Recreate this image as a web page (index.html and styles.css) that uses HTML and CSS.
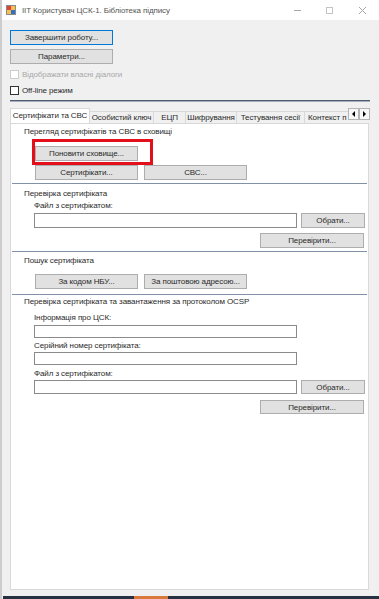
FILE: index.html
```html
<!DOCTYPE html>
<html lang="uk">
<head>
  <meta charset="UTF-8">
  <meta name="viewport" content="width=device-width, initial-scale=1.0">
  <title>IIT Користувач ЦСК-1. Бібліотека підпису</title>
  <link rel="stylesheet" href="styles.css">
</head>
<body>
  <div class="window">
    <div class="titlebar">
      <svg class="app-icon" width="10" height="10" viewBox="0 0 10 10">
        <rect x="0.5" y="0.5" width="9" height="9" fill="#f6c34a" stroke="#8a8a8a"/>
        <rect x="1" y="1" width="4" height="4" fill="#e0413a"/>
        <rect x="5" y="5" width="4" height="4" fill="#2f6fc9"/>
      </svg>
      <span class="title">IIT Користувач ЦСК-1. Бібліотека підпису</span>
      <div class="controls">
        <svg width="32" height="20" viewBox="0 0 32 20"><path d="M11 10.5h7" stroke="#a6a6a6" fill="none"/></svg>
        <svg width="32" height="20" viewBox="0 0 32 20"><rect x="11.5" y="7.5" width="6" height="6" stroke="#c4c4c4" fill="none"/></svg>
        <svg width="32" height="20" viewBox="0 0 32 20"><path d="M12 7l7 7M19 7l-7 7" stroke="#a6a6a6" fill="none"/></svg>
      </div>
    </div>

    <div class="client">
      <button class="btn btn-wide btn-default">Завершити роботу...</button>
      <button class="btn btn-wide btn-gap">Параметри...</button>
      <div class="check check-disabled"><span class="box"></span>Відображати власні діалоги</div>
      <div class="check"><span class="box"></span>Off-line режим</div>
      <div class="group-line"></div>

      <div class="tabs">
        <div class="tab-strip">
          <div class="tab-list">
            <div class="tab tab-active t1">Сертифікати та СВС</div>
            <div class="tab t2">Особистий ключ</div>
            <div class="tab t3">ЕЦП</div>
            <div class="tab t4">Шифрування</div>
            <div class="tab t5">Тестування сесії</div>
            <div class="tab t6">Контекст п</div>
          </div>
          <div class="tab-scroll">
            <span class="arrow"><svg width="9" height="10" viewBox="0 0 9 10"><path d="M3 5l3-3v6z" fill="#000"/></svg></span>
            <span class="arrow"><svg width="9" height="10" viewBox="0 0 9 10"><path d="M6 5l-3-3v6z" fill="#000"/></svg></span>
          </div>
        </div>

        <div class="tab-page">
          <div class="label head first">Перегляд сертифікатів та СВС в сховищі</div>
          <div class="indent">
            <button class="btn btn-wide refresh">Поновити сховище...</button>
            <div class="btn-row">
              <button class="btn btn-wide">Сертифікати...</button>
              <button class="btn btn-wide">СВС...</button>
            </div>
          </div>
          <div class="sep sep-a"></div>

          <div class="label head h2">Перевірка сертифіката</div>
          <div class="label sub">Файл з сертифікатом:</div>
          <div class="file-row">
            <input class="field" type="text">
            <button class="btn btn-pick">Обрати...</button>
          </div>
          <div class="check-row">
            <button class="btn btn-check">Перевірити...</button>
          </div>
          <div class="sep sep-b"></div>

          <div class="label head h3">Пошук сертифіката</div>
          <div class="indent">
            <div class="btn-row search-row">
              <button class="btn btn-wide">За кодом НБУ...</button>
              <button class="btn btn-wide">За поштовою адресою...</button>
            </div>
          </div>
          <div class="sep sep-c"></div>

          <div class="label head h4">Перевірка сертифіката та завантаження за протоколом OCSP</div>
          <div class="label sub s-info">Інформація про ЦСК:</div>
          <div class="file-row r-info"><input class="field small" type="text"></div>
          <div class="label sub s-serial">Серійний номер сертифіката:</div>
          <div class="file-row"><input class="field small" type="text"></div>
          <div class="label sub s-file">Файл з сертифікатом:</div>
          <div class="file-row">
            <input class="field mid" type="text">
            <button class="btn btn-pick mid">Обрати...</button>
          </div>
          <div class="check-row last">
            <button class="btn btn-check mid">Перевірити...</button>
          </div>

          <div class="mark"></div>
        </div>
      </div>

      <div class="taskbar"><span class="task-item"></span></div>
    </div>
  </div>
</body>
</html>
```

FILE: styles.css
```css
body {
  margin: 0;
  padding: 0;
  background: #f0f0f0;
  font-family: 'Liberation Sans', Arial, sans-serif;
  font-size: 8px;
  letter-spacing: -0.1px;
  color: #2a2a2a;
}

.window {
  width: 379px;
  height: 599px;
  box-sizing: border-box;
  border-left: 2px solid #cdcdcd;
  overflow: hidden;
}

.titlebar {
  height: 20px;
  background: #ffffff;
  display: flex;
  align-items: center;
}

.app-icon {
  margin-left: 4px;
  flex: none;
}

.title {
  margin-left: 6px;
  color: #555555;
  flex: 1;
}

.controls {
  display: flex;
}

.client {
  padding: 10px 8px 0 8px;
}

.btn {
  font: inherit;
  letter-spacing: inherit;
  color: #2a2a2a;
  background: #e1e1e1;
  border: 1px solid #adadad;
  height: 15px;
  padding: 0;
  margin: 0;
  display: block;
  box-sizing: border-box;
  text-align: center;
}

.btn-wide {
  width: 103px;
}

.btn-default {
  border-color: #0078d7;
}

.btn-gap {
  margin-top: 4px;
}

.check {
  height: 16px;
  display: flex;
  align-items: center;
}

.check-disabled {
  margin-top: 2px;
  color: #a8a8a8;
}

.box {
  width: 9px;
  height: 9px;
  box-sizing: border-box;
  border: 1px solid #333333;
  background: #ffffff;
  margin-right: 3px;
}

.check-disabled .box {
  border-color: #cccccc;
}

.group-line {
  margin-top: 2px;
  width: 360px;
  border-top: 1px solid #4f5d72;
  border-bottom: 1px solid #a7aebb;
}

.tabs {
  margin-top: 6px;
  width: 359px;
}

.tab-strip {
  display: flex;
  height: 15px;
  align-items: flex-end;
}

.tab-list {
  display: flex;
  align-items: flex-end;
  width: 338px;
  overflow: hidden;
  flex: none;
}

.tab {
  flex: none;
  height: 12px;
  line-height: 11px;
  box-sizing: border-box;
  border: 1px solid #d9d9d9;
  border-bottom: none;
  border-left: none;
  background: #f0f0f0;
  text-align: center;
  white-space: nowrap;
}

.tab-active {
  height: 16px;
  line-height: 14px;
  margin-bottom: -1px;
  background: #ffffff;
  border-left: 1px solid #d9d9d9;
  position: relative;
  z-index: 1;
}

.t1 { width: 80px; }
.t2 { width: 64px; }
.t3 { width: 32px; }
.t4 { width: 51px; }
.t5 { width: 68px; }
.t6 { width: 43px; text-align: left; padding-left: 3px; border-right: none; }

.tab-scroll {
  display: flex;
  align-self: flex-start;
}

.arrow {
  width: 11px;
  height: 12px;
  box-sizing: border-box;
  border: 1px solid #b5b5b5;
  background: #f7f7f7;
  display: flex;
  align-items: center;
  justify-content: center;
}

.tab-page {
  position: relative;
  height: 467px;
  box-sizing: border-box;
  background: #ffffff;
  border: 1px solid #d9d9d9;
}

.label {
  line-height: 12px;
  white-space: nowrap;
}

.head {
  padding-left: 13px;
}

.sub {
  padding-left: 23px;
}

.first { margin-top: 2px; }
.h2 { margin-top: 4px; }
.h3 { margin-top: 3px; }
.h4 { margin-top: 1px; }
.s-info { margin-top: 4px; }
.s-serial { margin-top: 2px; }
.s-file { margin-top: 3px; }

.sub + .label.sub { margin-top: 1px; }

.indent {
  padding-left: 24px;
}

.refresh {
  margin-top: 8px;
}

.btn-row {
  display: flex;
  gap: 6px;
  margin-top: 4px;
}

.search-row {
  margin-top: 7px;
}

.sep {
  margin: 0 1px;
  border-top: 1px solid #8391a6;
}

.sep-a { margin-top: 3px; }
.sep-b { margin-top: 3px; }
.sep-c { margin-top: 5px; }

.file-row {
  display: flex;
  gap: 4px;
  margin: 1px 4px 0 23px;
}

.r-info { margin-top: 1px; }

.s-serial + .file-row,
.s-file + .file-row { margin-top: 0; }

.field {
  flex: none;
  width: 263px;
  height: 15px;
  box-sizing: border-box;
  border: 1px solid #8a8a8a;
  background: #ffffff;
  padding: 0;
  margin: 0;
  outline: none;
}

.field.small { height: 13px; }
.field.mid { height: 14px; }

.btn-pick {
  width: 64px;
  flex: none;
}

.btn.mid { height: 14px; }

.check-row {
  display: flex;
  justify-content: flex-end;
  margin: 5px 4px 0 0;
}

.check-row.last { margin-top: 6px; }

.btn-check {
  width: 104px;
}

.mark {
  position: absolute;
  left: 21px;
  top: 15px;
  width: 121px;
  height: 26px;
  box-sizing: border-box;
  border: 3px solid #e3101c;
}

.taskbar {
  margin: 6px 0 0 -7px;
  width: 377px;
  height: 3px;
  background: #263142;
}

.task-item {
  display: block;
  margin-left: 131px;
  width: 34px;
  height: 3px;
  background: #d9793c;
}
```
